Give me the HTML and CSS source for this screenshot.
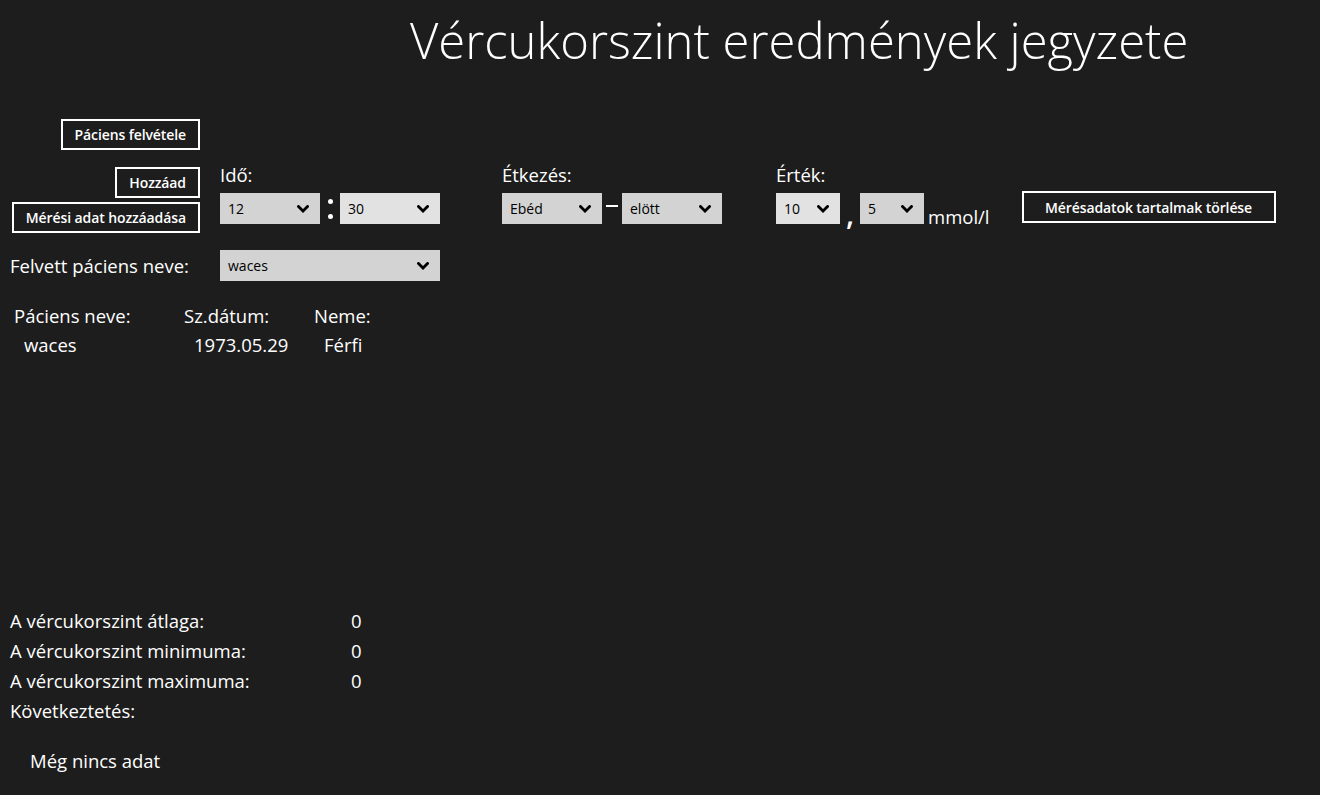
FILE: index.html
```html
<!DOCTYPE html>
<html lang="hu">
<head>
<meta charset="utf-8">
<title>Vércukorszint eredmények jegyzete</title>
<link rel="stylesheet" href="styles.css">
</head>
<body>
<div class="page">
  <h1 class="title">Vércukorszint eredmények jegyzete</h1>

  <div class="row row-first">
    <div class="leftcol">
      <button class="btn">Páciens felvétele</button>
    </div>
  </div>

  <div class="row row-controls">
    <div class="leftcol leftcol-stack">
      <button class="btn">Hozzáad</button>
      <button class="btn">Mérési adat hozzáadása</button>
    </div>
    <div class="group group-time">
      <div class="label">Idő:</div>
      <div class="combos">
        <div class="combo combo-w100"><span>12</span><svg class="chev" viewBox="0 0 12 8"><polyline points="1.5,1.5 6,6 10.5,1.5"/></svg></div>
        <div class="sep sep-colon"><span class="dot"></span><span class="dot"></span></div>
        <div class="combo combo-w100 combo-light"><span>30</span><svg class="chev" viewBox="0 0 12 8"><polyline points="1.5,1.5 6,6 10.5,1.5"/></svg></div>
      </div>
    </div>
    <div class="group group-meal">
      <div class="label">Étkezés:</div>
      <div class="combos">
        <div class="combo combo-w100"><span>Ebéd</span><svg class="chev" viewBox="0 0 12 8"><polyline points="1.5,1.5 6,6 10.5,1.5"/></svg></div>
        <div class="sep sep-dash"><span class="dash"></span></div>
        <div class="combo combo-w100"><span>elött</span><svg class="chev" viewBox="0 0 12 8"><polyline points="1.5,1.5 6,6 10.5,1.5"/></svg></div>
      </div>
    </div>
    <div class="group group-value">
      <div class="label">Érték:</div>
      <div class="combos">
        <div class="combo combo-w64 combo-light"><span>10</span><svg class="chev" viewBox="0 0 12 8"><polyline points="1.5,1.5 6,6 10.5,1.5"/></svg></div>
        <div class="sep sep-comma">,</div>
        <div class="combo combo-w64"><span>5</span><svg class="chev" viewBox="0 0 12 8"><polyline points="1.5,1.5 6,6 10.5,1.5"/></svg></div>
        <div class="unit">mmol/l</div>
      </div>
    </div>
    <button class="btn btn-clear">Mérésadatok tartalmak törlése</button>
  </div>

  <div class="row row-patient">
    <div class="leftcol leftcol-label">Felvett páciens neve:</div>
    <div class="combo combo-w220"><span>waces</span><svg class="chev" viewBox="0 0 12 8"><polyline points="1.5,1.5 6,6 10.5,1.5"/></svg></div>
  </div>

  <div class="patients">
    <div class="ph">Páciens neve:</div>
    <div class="ph">Sz.dátum:</div>
    <div class="ph">Neme:</div>
    <div class="pd">waces</div>
    <div class="pd">1973.05.29</div>
    <div class="pd">Férfi</div>
  </div>

  <div class="stats">
    <div class="stat"><span class="stat-name">A vércukorszint átlaga:</span><span class="stat-val">0</span></div>
    <div class="stat"><span class="stat-name">A vércukorszint minimuma:</span><span class="stat-val">0</span></div>
    <div class="stat"><span class="stat-name">A vércukorszint maximuma:</span><span class="stat-val">0</span></div>
    <div class="stat"><span class="stat-name">Következtetés:</span></div>
    <div class="conclusion">Még nincs adat</div>
  </div>
</div>
</body>
</html>
```

FILE: styles.css
```css
html, body {
  margin: 0;
  padding: 0;
  background: #1d1d1d;
}

body {
  color: #ffffff;
  font-family: "Open Sans", "Noto Sans", "Liberation Sans", sans-serif;
  width: 1320px;
  height: 795px;
  overflow: hidden;
}

.page {
  display: flex;
  flex-direction: column;
}

.title {
  margin: 0;
  padding-left: 410px;
  font-weight: 300;
  font-size: 49px;
  line-height: 80px;
  height: 80px;
  letter-spacing: 0;
}

.row {
  display: flex;
  align-items: flex-start;
}

.row-first {
  margin-top: 39px;
}

.leftcol {
  width: 200px;
  flex: none;
  display: flex;
  justify-content: flex-end;
}

.leftcol-stack {
  flex-direction: column;
  align-items: flex-end;
  gap: 4px;
  padding-top: 5px;
}

.btn {
  box-sizing: border-box;
  height: 31px;
  margin: 0;
  padding: 0 12px;
  background: transparent;
  border: 2px solid #ffffff;
  color: #ffffff;
  font-family: "Open Sans", "Noto Sans", sans-serif;
  font-weight: 600;
  font-size: 14px;
  letter-spacing: -0.1px;
  cursor: pointer;
}

.row-controls {
  margin-top: 12px;
}

.group {
  display: flex;
  flex-direction: column;
  flex: none;
}

.group-time {
  margin-left: 20px;
}

.group-meal {
  margin-left: 62px;
}

.group-value {
  margin-left: 54px;
}

.label {
  font-size: 18.5px;
  line-height: 26px;
  height: 26px;
}

.combos {
  display: flex;
  align-items: flex-start;
  margin-top: 5px;
}

.combo {
  box-sizing: border-box;
  height: 31px;
  background: #d3d3d3;
  color: #000000;
  display: flex;
  align-items: center;
  justify-content: space-between;
  padding: 0 11px 0 8px;
  font-size: 14px;
  flex: none;
}

.combo-light {
  background: #e2e2e2;
}

.combo-w100 { width: 100px; }
.combo-w64 { width: 64px; }
.combo-w220 { width: 220px; margin-left: 20px; }

.chev {
  width: 12px;
  height: 8px;
  flex: none;
}

.chev polyline {
  fill: none;
  stroke: #000000;
  stroke-width: 2.8;
  stroke-linecap: square;
  stroke-linejoin: miter;
}

.sep {
  width: 20px;
  height: 31px;
  flex: none;
  display: flex;
  align-items: center;
  justify-content: center;
}

.sep-colon {
  flex-direction: column;
  gap: 10px;
}

.dot {
  width: 5px;
  height: 5px;
  border-radius: 50%;
  background: #ffffff;
}

.dash {
  width: 12px;
  height: 2px;
  background: #ffffff;
  margin-top: -6px;
}

.sep-comma {
  font-size: 30px;
  font-weight: 600;
  align-items: flex-end;
  line-height: 31px;
  height: 36px;
}

.unit {
  margin-left: 4px;
  font-size: 18.5px;
  line-height: 26px;
  padding-top: 11px;
}

.btn-clear {
  margin-left: 32px;
  margin-top: 29px;
  width: 254px;
  height: 32px;
}

.row-patient {
  margin-top: 17px;
  align-items: center;
}

.leftcol-label {
  justify-content: flex-start;
  padding-left: 10px;
  box-sizing: border-box;
  font-size: 18.5px;
  white-space: nowrap;
}

.patients {
  margin-top: 20px;
  padding-left: 14px;
  display: grid;
  grid-template-columns: 170px 130px auto;
  grid-auto-rows: 29px;
  font-size: 18.5px;
  line-height: 29px;
}

.pd {
  padding-left: 10px;
}

.stats {
  margin-top: 247px;
  padding-left: 10px;
  font-size: 18.5px;
}

.stat {
  display: flex;
  height: 30px;
  line-height: 30px;
}

.stat-name {
  width: 341px;
  flex: none;
}

.conclusion {
  margin-top: 20px;
  padding-left: 20px;
  line-height: 30px;
}
```
